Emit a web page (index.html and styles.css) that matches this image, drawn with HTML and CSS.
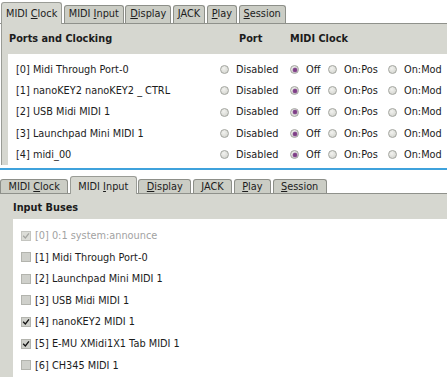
FILE: index.html
```html
<!DOCTYPE html>
<html>
<head>
<meta charset="utf-8">
<link rel="stylesheet" href="styles.css">
</head>
<body>
<div class="win win1">
  <div class="tabs">
    <div class="tab active">MIDI <u>C</u>lock</div>
    <div class="tab">MIDI <u>I</u>nput</div>
    <div class="tab"><u>D</u>isplay</div>
    <div class="tab"><u>J</u>ACK</div>
    <div class="tab"><u>P</u>lay</div>
    <div class="tab"><u>S</u>ession</div>
  </div>
  <div class="pane">
    <div class="grid head">
      <span class="h-name">Ports and Clocking</span>
      <span class="h-port">Port</span>
      <span class="h-clock">MIDI Clock</span>
    </div>
    <div class="list">
      <div class="grid row">
        <span class="name">[0] Midi Through Port-0</span>
        <span class="opt"><i class="radio"></i>Disabled</span>
        <span class="opt"><i class="radio on"></i>Off</span>
        <span class="opt"><i class="radio"></i>On:Pos</span>
        <span class="opt"><i class="radio"></i>On:Mod</span>
      </div>
      <div class="grid row">
        <span class="name">[1] nanoKEY2 nanoKEY2 _ CTRL</span>
        <span class="opt"><i class="radio"></i>Disabled</span>
        <span class="opt"><i class="radio on"></i>Off</span>
        <span class="opt"><i class="radio"></i>On:Pos</span>
        <span class="opt"><i class="radio"></i>On:Mod</span>
      </div>
      <div class="grid row">
        <span class="name">[2] USB Midi MIDI 1</span>
        <span class="opt"><i class="radio"></i>Disabled</span>
        <span class="opt"><i class="radio on"></i>Off</span>
        <span class="opt"><i class="radio"></i>On:Pos</span>
        <span class="opt"><i class="radio"></i>On:Mod</span>
      </div>
      <div class="grid row">
        <span class="name">[3] Launchpad Mini MIDI 1</span>
        <span class="opt"><i class="radio"></i>Disabled</span>
        <span class="opt"><i class="radio on"></i>Off</span>
        <span class="opt"><i class="radio"></i>On:Pos</span>
        <span class="opt"><i class="radio"></i>On:Mod</span>
      </div>
      <div class="grid row">
        <span class="name">[4] midi_00</span>
        <span class="opt"><i class="radio"></i>Disabled</span>
        <span class="opt"><i class="radio on"></i>Off</span>
        <span class="opt"><i class="radio"></i>On:Pos</span>
        <span class="opt"><i class="radio"></i>On:Mod</span>
      </div>
    </div>
  </div>
</div>
<div class="sep"></div>
<div class="win win2">
  <div class="tabs">
    <div class="tab">MIDI <u>C</u>lock</div>
    <div class="tab active">MIDI <u>I</u>nput</div>
    <div class="tab"><u>D</u>isplay</div>
    <div class="tab"><u>J</u>ACK</div>
    <div class="tab"><u>P</u>lay</div>
    <div class="tab"><u>S</u>ession</div>
  </div>
  <div class="pane">
    <div class="head">Input Buses</div>
    <div class="list">
      <div class="crow disabled"><i class="check checked"><svg viewBox="0 0 10 10"><path d="M2 5.2 L4.2 7.4 L8.2 2.4" /></svg></i>[0] 0:1 system:announce</div>
      <div class="crow"><i class="check"></i>[1] Midi Through Port-0</div>
      <div class="crow"><i class="check"></i>[2] Launchpad Mini MIDI 1</div>
      <div class="crow"><i class="check"></i>[3] USB Midi MIDI 1</div>
      <div class="crow"><i class="check checked"><svg viewBox="0 0 10 10"><path d="M2 5.2 L4.2 7.4 L8.2 2.4" /></svg></i>[4] nanoKEY2 MIDI 1</div>
      <div class="crow"><i class="check checked"><svg viewBox="0 0 10 10"><path d="M2 5.2 L4.2 7.4 L8.2 2.4" /></svg></i>[5] E-MU XMidi1X1 Tab MIDI 1</div>
      <div class="crow"><i class="check"></i>[6] CH345 MIDI 1</div>
    </div>
  </div>
</div>
</body>
</html>
```

FILE: styles.css
```css
* { box-sizing: border-box; }
html, body { margin: 0; padding: 0; }
body {
  width: 447px;
  height: 377px;
  overflow: hidden;
  background: #ffffff;
  font-family: "DejaVu Sans", "Noto Sans", sans-serif;
  font-size: 9.75px;
  color: #1c1c1c;
}
u { text-decoration: underline; text-underline-offset: 1px; }
i { font-style: normal; }

.win { display: flex; flex-direction: column; }

/* tabs */
.tabs {
  display: flex;
  align-items: flex-end;
  gap: 1.5px;
  border-bottom: 1px solid #8f918b;
}
.tab {
  background: #cbcdc5;
  border: 1px solid #8d8f89;
  border-bottom: none;
  border-radius: 3px 3px 0 0;
  white-space: nowrap;
}
.tab.active {
  background: #d6d7d0;
  border-color: #9a9c96;
  margin-bottom: -1px;
}

.win1 { height: 165px; }
.win1 .tabs { height: 24px; padding-left: 1px; }
.win1 .tab { height: 18px; line-height: 16px; padding: 0 4px; }
.win1 .tab.active { height: 22px; padding-top: 3px; }

.win2 .tabs { height: 24px; padding-left: 0; }
.win2 .tab { height: 14px; line-height: 13px; padding: 0 7.5px; }
.win2 .tab.active { height: 18px; padding-top: 2.5px; }

/* panes */
.pane {
  flex: 1;
  background: #d6d7d0;
  display: flex;
  flex-direction: column;
}
.win1 .pane {
  margin-left: 1px;
  border-left: 1px solid #9a9c96;
  padding-left: 6px;
}
.list { background: #ffffff; flex: 1; }

/* section 1 grid */
.grid {
  display: grid;
  grid-template-columns: 212px 70px 38px 60px 1fr;
  align-items: center;
}
.head { font-weight: bold; }
.win1 .head { height: 30px; }
.h-name { padding-left: 1px; }
.h-port { padding-left: 19px; }
.h-clock { grid-column: 3 / span 3; }

.win1 .list { padding-top: 5px; }
.row { height: 21.3px; }
.name { padding-left: 8px; white-space: nowrap; }
.opt { display: flex; align-items: center; white-space: nowrap; }

.radio {
  width: 9px;
  height: 9px;
  border-radius: 50%;
  border: 1px solid #a3a59f;
  background: radial-gradient(circle at 40% 35%, #f2f2ef 0%, #d9dad5 70%, #cfd0ca 100%);
  margin-right: 7px;
  margin-top: 1px;
  display: flex;
  align-items: center;
  justify-content: center;
  flex: none;
}
.radio.on::after {
  content: "";
  width: 4px;
  height: 4px;
  border-radius: 50%;
  background: #7e3f86;
  box-shadow: 0 0 0 0.5px #a77bad;
}

/* separator */
.sep {
  height: 2px;
  margin-top: 3px;
  background: #3fa2dc;
}

/* section 2 */
.win2 { flex: 1; height: 207px; padding-top: 0; }
.win2 .tabs { margin-top: 0; height: 24px; }
.win2 .pane { padding-left: 13px; }
.win2 .head { height: 25px; padding-top: 3px; line-height: 22px; }
.win2 .list { padding-top: 6px; }

.crow {
  height: 21.55px;
  display: flex;
  align-items: center;
  padding-left: 8px;
  white-space: nowrap;
}
.crow.disabled { color: #a2a2a2; }
.check {
  width: 10px;
  height: 10px;
  border: 1px solid #b3b4ae;
  background: #cfd0cb;
  margin-right: 4px;
  flex: none;
  display: flex;
  align-items: center;
  justify-content: center;
}
.check svg { width: 10px; height: 10px; }
.check path {
  fill: none;
  stroke: #111;
  stroke-width: 1.6;
  stroke-linecap: square;
}
.crow.disabled .check { background: #dcddd8; border-color: #c4c5c0; }
.crow.disabled .check path { stroke: #a5a6a2; }
```
